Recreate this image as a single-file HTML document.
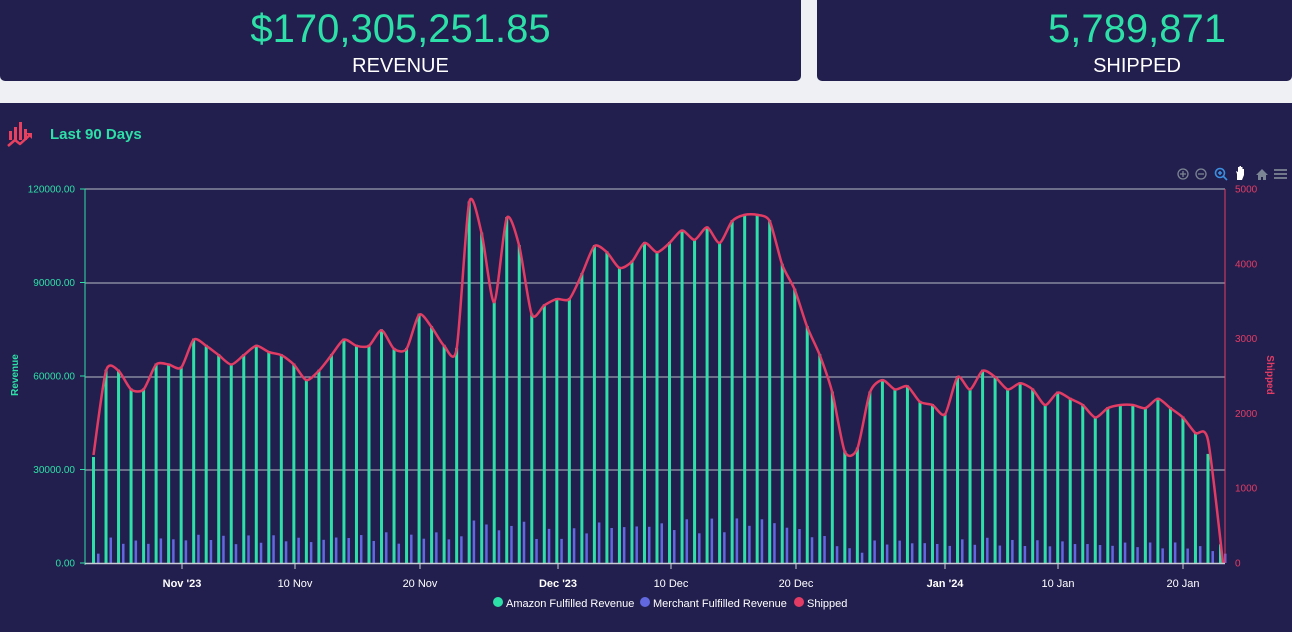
<!DOCTYPE html>
<html><head><meta charset="utf-8">
<style>
*{margin:0;padding:0;box-sizing:border-box}
body{width:1292px;height:632px;background:#eef0f3;font-family:"Liberation Sans",sans-serif;position:relative;overflow:hidden}
.card{position:absolute;top:0;height:81px;background:#221f4e;border-radius:0 0 5px 5px;color:#fff;text-align:center}
.big{color:#2de0a7;font-size:40px;line-height:42px;padding-top:8px}
.lbl{font-size:20px;margin-top:5px}
.panel{position:absolute;left:0;top:103px;width:1292px;height:529px;background:#221f4e}
</style></head><body>
<div class="card" style="left:0;width:801px"><div class="big">$170,305,251.85</div><div class="lbl">REVENUE</div></div>
<div class="card" style="left:817px;width:475px"><div class="big" style="padding-left:165px">5,789,871</div><div class="lbl" style="padding-left:165px">SHIPPED</div></div>
<div class="panel"></div>
<svg id="s" width="1292" height="632" style="position:absolute;left:0;top:0" font-family="Liberation Sans, sans-serif">
<g fill="#e8415f">
<rect x="9" y="131" width="3" height="9"/><rect x="14" y="127" width="3" height="13"/><rect x="19" y="122" width="3" height="18"/><rect x="24" y="129" width="3" height="11"/>
</g>
<path d="M8 146l7-6 5 4 10-9" stroke="#e8415f" stroke-width="2.5" fill="none" stroke-linejoin="round"/>
<path d="M26 133h6v6z" fill="#e8415f"/>
<text x="50" y="139" fill="#2de0a7" font-size="15" font-weight="bold">Last 90 Days</text>
<g fill="none" stroke="#7c8593" stroke-width="1.3">
<circle cx="1183" cy="174" r="5"/><path d="M1180 174h6M1183 171v6"/>
<circle cx="1201" cy="174" r="5"/><path d="M1198 174h6"/>
</g>
<g fill="none" stroke="#3b8fe0" stroke-width="1.6"><circle cx="1220" cy="173" r="4.5"/><path d="M1223 176l4 4M1218 173h4M1220 171v4"/></g>
<path d="M1237 180v-6l-1-3 2 1v-5h1.5v4v-5h1.5v5v-4h1.5v5v-3h1.5v6l-2 5z" fill="#fff"/>
<path d="M1256 175l6-6 6 6h-2v5h-3v-3h-2v3h-3v-5z" fill="#7c8593"/>
<path d="M1274 170h13M1274 174h13M1274 178h13" stroke="#7c8593" stroke-width="1.8"/>
<g id="g"></g>
</svg>
<script>
var G=[34,62,62,56,56,64,64,63,72,70,67,64,67,70,68,67,64,59,62,67,72,70,70,75,69,69,80,76,70,69,116,106,84,111,102,80,83,85,85,93,102,100,95,97,103,100,103,107,104,108,103,110,112,112,110,96,88,76,67,55,36,37,55,59,56,57,52,51,48,60,56,62,60,56,58,56,51,55,53,51,47,50,51,51,50,53,50,47,42,35,6];
var h='';
var Y=function(v){return 563-v*3.117};
[189,283,377,470].forEach(function(y){h+='<line x1="85" x2="1225" y1="'+y+'" y2="'+y+'" stroke="#b8bcc6" stroke-width="1"/>';});
var xs=[],ys=[];
var sp=(1220-93)/(G.length-1);
G.forEach(function(v,i){var x=92+i*sp;
var p=Math.max(3,v*0.11*(0.8+0.4*Math.abs(Math.sin(i*1.7))));
h+='<rect x="'+x+'" y="'+Y(v)+'" width="3" height="'+(v*3.117)+'" fill="#2de0a7"/>';
h+='<rect x="'+(x+5)+'" y="'+Y(p)+'" width="2.5" height="'+(p*3.117)+'" fill="#6268e0"/>';
xs.push(x+1.5);ys.push(Y(v)+1);});
ys[0]=455;ys[ys.length-1]=563;xs[xs.length-1]=1223;ys[ys.length-2]=440;
var d='M'+xs[0]+' '+ys[0];var k=8;
for(var i=0;i<xs.length-1;i++){var x0=xs[Math.max(0,i-1)],y0=ys[Math.max(0,i-1)],x1=xs[i],y1=ys[i],x2=xs[i+1],y2=ys[i+1],x3=xs[Math.min(xs.length-1,i+2)],y3=ys[Math.min(xs.length-1,i+2)];
d+=' C'+(x1+(x2-x0)/k)+' '+(y1+(y2-y0)/k)+' '+(x2-(x3-x1)/k)+' '+(y2-(y3-y1)/k)+' '+x2+' '+y2;}
h+='<path d="'+d+'" fill="none" stroke="#e23c64" stroke-width="2.5"/>';
h+='<line x1="85" x2="85" y1="189" y2="565" stroke="#2de0a7"/><line x1="1225" x2="1225" y1="189" y2="563" stroke="#e23c64"/>';
h+='<line x1="85" x2="1225" y1="563.5" y2="563.5" stroke="#c8ccd4" stroke-width="1.5"/>';
['0.00','30000.00','60000.00','90000.00','120000.00'].forEach(function(t,i){var y=563-i*93.5;h+='<text x="75" y="'+(y+3.5)+'" text-anchor="end" fill="#2de0a7" font-size="10">'+t+'</text><line x1="80" x2="85" y1="'+y+'" y2="'+y+'" stroke="#2de0a7"/>';});
for(var i=0;i<=5;i++){var y=563-i*74.8;h+='<text x="1235" y="'+(y+3.5)+'" fill="#e23c64" font-size="10">'+(i*1000)+'</text>';}
h+='<text transform="translate(18,375) rotate(-90)" text-anchor="middle" fill="#2de0a7" font-size="10" font-weight="bold">Revenue</text>';
h+='<text transform="translate(1267,375) rotate(90)" text-anchor="middle" fill="#e23c64" font-size="10" font-weight="bold">Shipped</text>';
[[182,"Nov '23",1],[295,"10 Nov",0],[420,"20 Nov",0],[558,"Dec '23",1],[671,"10 Dec",0],[796,"20 Dec",0],[945,"Jan '24",1],[1058,"10 Jan",0],[1183,"20 Jan",0]].forEach(function(a){h+='<line x1="'+a[0]+'" x2="'+a[0]+'" y1="563" y2="569" stroke="#c8ccd4"/><text x="'+a[0]+'" y="587" text-anchor="middle" fill="#fff" font-size="11"'+(a[2]?' font-weight="bold"':'')+'>'+a[1]+'</text>';});
h+='<circle cx="498" cy="602" r="5" fill="#2de0a7"/><text x="506" y="607" fill="#fff" font-size="11">Amazon Fulfilled Revenue</text>';
h+='<circle cx="645" cy="602" r="5" fill="#6268e0"/><text x="653" y="607" fill="#fff" font-size="11">Merchant Fulfilled Revenue</text>';
h+='<circle cx="799" cy="602" r="5" fill="#e23c64"/><text x="807" y="607" fill="#fff" font-size="11">Shipped</text>';
document.getElementById('g').innerHTML=h;
</script>
</body></html>
